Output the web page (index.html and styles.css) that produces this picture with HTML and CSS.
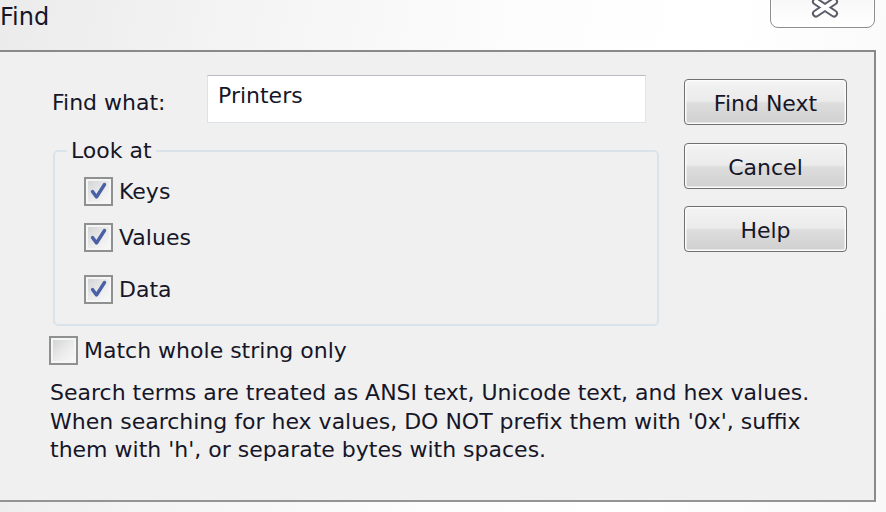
FILE: index.html
```html
<!DOCTYPE html>
<html>
<head>
<meta charset="utf-8">
<link rel="stylesheet" href="styles.css">
</head>
<body>
<div class="window">
  <div class="titlebar">
    <span class="title">Find</span>
    <div class="close">
      <svg width="32" height="30" viewBox="0 0 32 30">
        <path d="M7 8.5 L25 20.5 M25 8.5 L7 20.5" stroke="#5a5c68" stroke-width="8" stroke-linecap="round" fill="none"/>
        <path d="M7 8.5 L25 20.5 M25 8.5 L7 20.5" stroke="#ffffff" stroke-width="4" stroke-linecap="round" fill="none"/>
      </svg>
    </div>
  </div>
  <div class="client">
    <div class="main">
      <div class="findrow">
        <span class="lbl">Find what:</span>
        <div class="input">Printers</div>
      </div>
      <fieldset class="group">
        <legend>Look at</legend>
        <div class="check c-keys"><span class="box"><svg width="25" height="25" viewBox="0 0 25 25"><path d="M6.5 12.5 L10.5 18 L18.5 5.5" stroke="#4a61a8" stroke-width="3.4" stroke-linecap="round" stroke-linejoin="round" fill="none"/></svg></span>Keys</div>
        <div class="check c-values"><span class="box"><svg width="25" height="25" viewBox="0 0 25 25"><path d="M6.5 12.5 L10.5 18 L18.5 5.5" stroke="#4a61a8" stroke-width="3.4" stroke-linecap="round" stroke-linejoin="round" fill="none"/></svg></span>Values</div>
        <div class="check c-data"><span class="box"><svg width="25" height="25" viewBox="0 0 25 25"><path d="M6.5 12.5 L10.5 18 L18.5 5.5" stroke="#4a61a8" stroke-width="3.4" stroke-linecap="round" stroke-linejoin="round" fill="none"/></svg></span>Data</div>
      </fieldset>
      <div class="check c-match"><span class="box"></span>Match whole string only</div>
      <p class="note">Search terms are treated as ANSI text, Unicode text, and hex values.<br>When searching for hex values, DO NOT prefix them with '0x', suffix<br>them with 'h', or separate bytes with spaces.</p>
    </div>
    <div class="buttons">
      <div class="btn">Find Next</div>
      <div class="btn">Cancel</div>
      <div class="btn">Help</div>
    </div>
  </div>
</div>
</body>
</html>
```
FILE: styles.css
```css
html, body {
  margin: 0;
  padding: 0;
}
body {
  width: 886px;
  height: 512px;
  overflow: hidden;
  background: linear-gradient(100deg, #ebebeb 0%, #f4f4f4 25%, #fdfdfd 55%, #ffffff 75%, #f8f8f8 100%);
  font-family: "DejaVu Sans", "Liberation Sans", sans-serif;
  color: #161628;
  font-size: 22px;
}
.titlebar {
  height: 50px;
  display: flex;
  align-items: flex-start;
}
.title {
  font-size: 24px;
  line-height: 30px;
  margin-top: 2px;
}
.close {
  margin-left: auto;
  margin-right: 11px;
  margin-top: -8px;
  width: 105px;
  height: 36px;
  box-sizing: border-box;
  border: 1.5px solid #8e8e8e;
  border-radius: 0 0 8px 8px;
  background: linear-gradient(#f6f6f6, #ffffff);
  box-shadow: inset 0 0 0 1px #ffffff;
  display: flex;
  justify-content: center;
  align-items: flex-start;
  padding-left: 4px;
}
.client {
  width: 876px;
  height: 452px;
  box-sizing: border-box;
  border-top: 2px solid #8a8a8a;
  border-right: 2px solid #8a8a8a;
  border-bottom: 2px solid #949494;
  background: #f0f0f0;
  display: flex;
}
.main {
  width: 659px;
  box-sizing: border-box;
  padding-left: 49px;
  padding-top: 23px;
}
.findrow {
  display: flex;
  align-items: center;
  height: 48px;
}
.lbl {
  width: 155px;
  padding-left: 3px;
  padding-top: 6px;
}
.input {
  width: 439px;
  height: 48px;
  box-sizing: border-box;
  background: #ffffff;
  border: 1px solid #dde3ea;
  border-top-color: #b9bcc4;
  padding: 8px 10px;
  line-height: 24px;
}
.group {
  margin: 16px 0 0 4px;
  width: 606px;
  box-sizing: border-box;
  border: 2px solid #dbe3ea;
  border-radius: 5px;
  padding: 14px 0 20px 0;
}
.group legend {
  padding: 0 4px;
  margin-left: 12px;
  line-height: 24px;
}
.group .check {
  margin-left: 29px;
}
.check {
  display: flex;
  align-items: center;
  height: 29px;
  line-height: 29px;
}
.box {
  width: 29px;
  height: 29px;
  box-sizing: border-box;
  border: 2px solid #8f9090;
  background: linear-gradient(135deg, #cfd0d2 0%, #ececec 55%, #fafafa 100%);
  box-shadow: inset 0 0 0 2px #f5f5f5;
  margin-right: 6px;
  display: flex;
  align-items: center;
  justify-content: center;
  flex-shrink: 0;
}
.c-values {
  margin-top: 17px;
}
.c-data {
  margin-top: 23px;
}
.c-match {
  margin-top: 10px;
}
.note {
  margin: 14px 0 0 1px;
  line-height: 28.5px;
  white-space: nowrap;
}
.buttons {
  margin-left: 25px;
  padding-top: 27px;
  display: flex;
  flex-direction: column;
  gap: 17.5px;
}
.btn {
  width: 163px;
  height: 46px;
  box-sizing: border-box;
  border: 1.5px solid #707070;
  border-radius: 4px;
  background: linear-gradient(#f3f3f3 0%, #ebebeb 48%, #dddddd 52%, #d0d0d0 100%);
  box-shadow: inset 0 0 0 1.5px #fbfbfb;
  text-align: center;
  line-height: 44px;
  padding-top: 2px;
}
```
